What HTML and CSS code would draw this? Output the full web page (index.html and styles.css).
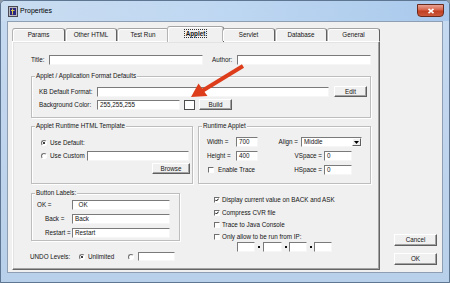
FILE: index.html
```html
<!DOCTYPE html>
<html>
<head>
<meta charset="utf-8">
<title>Properties</title>
<link rel="stylesheet" href="styles.css">
</head>
<body>
<div class="window">
  <div class="titlebar">
    <svg class="appicon" width="10" height="11" viewBox="0 0 10 11">
      <rect x="0.5" y="0.5" width="9" height="10" fill="#b9b9c4" stroke="#4a4a55"/>
      <rect x="2" y="2" width="6" height="7" fill="#2b2781"/>
      <path d="M4.5 2.5 V8.5 M3 4.5 H6.5" stroke="#d8c84a" stroke-width="1"/>
    </svg>
    <span class="title">Properties</span>
    <div class="close">
      <svg width="8" height="6" viewBox="0 0 8 6"><path d="M1.5 0.8 L6.5 5.2 M6.5 0.8 L1.5 5.2" stroke="#fff" stroke-width="1.6"/></svg>
    </div>
  </div>

  <div class="client">
    <div class="tabctl">
      <div class="tabs">
        <div class="tab w53">Params</div>
        <div class="tab w52">Other HTML</div>
        <div class="tab w52">Test Run</div>
        <div class="tab active"><span class="focus">Applet</span></div>
        <div class="tab w53">Servlet</div>
        <div class="tab w52">Database</div>
        <div class="tab w53">General</div>
      </div>

      <div class="panel">
        <div class="row h10">
          <span class="lbl lw18">Title:</span>
          <span class="inp iw154"></span>
          <span class="lbl author">Author:</span>
          <span class="inp iw134"></span>
        </div>

        <div class="grp g1">
          <span class="legend">Applet / Application Format Defaults</span>
          <div class="row h11">
            <span class="lbl lw58">KB Default Format:</span>
            <span class="inp iw232"></span>
            <span class="btn bw33 ml5">Edit</span>
          </div>
          <div class="row h11 mt2">
            <span class="lbl lw58">Background Color:</span>
            <span class="inp iw83">255,255,255</span>
            <span class="swatch"></span>
            <span class="btn bw33 ml4">Build</span>
          </div>
        </div>

        <div class="grprow">
          <div class="grp tmpl">
            <span class="legend">Applet Runtime HTML Template</span>
            <div class="row h11">
              <span class="radio on"></span><span class="rtext">Use Default:</span>
            </div>
            <div class="row h11 mt2">
              <span class="radlbl"><span class="radio"></span><span class="rtext">Use Custom</span></span>
              <span class="inp iw102"></span>
            </div>
            <div class="row h11 mt2 end">
              <span class="btn bw38">Browse</span>
            </div>
          </div>

          <div class="grp runtime">
            <span class="legend">Runtime Applet</span>
            <div class="row h10">
              <span class="lbl lw29">Width =</span>
              <span class="inp iw22">700</span>
              <span class="lbl rl43">Align =</span>
              <span class="select"><span class="seltext">Middle</span><span class="ddbtn"><svg width="5" height="3" viewBox="0 0 5 3"><path d="M0 0 H5 L2.5 3 Z" fill="#000"/></svg></span></span>
            </div>
            <div class="row h10 mt4">
              <span class="lbl lw29">Height =</span>
              <span class="inp iw22">400</span>
              <span class="lbl rl66">VSpace =</span>
              <span class="inp iw28">0</span>
            </div>
            <div class="row h10 mt4">
              <span class="cklbl"><span class="check"></span><span class="ctext">Enable Trace</span></span>
              <span class="lbl rl66">HSpace =</span>
              <span class="inp iw28">0</span>
            </div>
          </div>
        </div>

        <div class="row3">
          <div class="leftcol">
            <div class="grp btnlbl">
              <span class="legend">Button Labels:</span>
              <div class="row h10">
                <span class="lbl lw40 pl5">OK =</span>
                <span class="inp iw98">&nbsp;&nbsp;OK</span>
              </div>
              <div class="row h10 mt4">
                <span class="lbl lw40 pl13">Back =</span>
                <span class="inp iw98">Back</span>
              </div>
              <div class="row h10 mt4">
                <span class="lbl lw40 pl13">Restart =</span>
                <span class="inp iw98">Restart</span>
              </div>
            </div>
            <div class="row undo">
              <span class="lbl undolbl">UNDO Levels:</span>
              <span class="radio on"></span><span class="rtext unl">Unlimited</span>
              <span class="radio"></span>
              <span class="inp iw37 ml4"></span>
            </div>
          </div>

          <div class="checks">
            <div class="row"><span class="check on"><svg width="4" height="4" viewBox="0 0 4 4"><path d="M0.3 1.8 L1.5 3 L3.7 0.6" stroke="#000" stroke-width="1" fill="none"/></svg></span><span class="ctext2">Display current value on BACK and ASK</span></div>
            <div class="row"><span class="check on"><svg width="4" height="4" viewBox="0 0 4 4"><path d="M0.3 1.8 L1.5 3 L3.7 0.6" stroke="#000" stroke-width="1" fill="none"/></svg></span><span class="ctext2">Compress CVR file</span></div>
            <div class="row"><span class="check"></span><span class="ctext2">Trace to Java Console</span></div>
            <div class="row"><span class="check"></span><span class="ctext2">Only allow to be run from IP:</span></div>
            <div class="row ip">
              <span class="inp iw18"></span><span class="dot"></span>
              <span class="inp iw19"></span><span class="dot"></span>
              <span class="inp iw18"></span><span class="dot"></span>
              <span class="inp iw18"></span>
            </div>
          </div>
        </div>
      </div>
    </div>

    <div class="side">
      <span class="btn sbtn">Cancel</span>
      <span class="btn sbtn">OK</span>
    </div>
  </div>

  <svg class="arrow" width="450" height="283" viewBox="0 0 450 283">
    <line x1="243" y1="66" x2="202" y2="91" stroke="#dd3d1a" stroke-width="4"/>
    <polygon points="191,97 198.5,83.5 207.5,96" fill="#dd3d1a"/>
  </svg>
</div>
</body>
</html>
```

FILE: styles.css
```css
* { box-sizing: border-box; margin: 0; padding: 0; }
html, body { width: 450px; height: 283px; overflow: hidden; }
body {
  background: #8d99a6;
  font-family: "Liberation Sans", Arial, sans-serif;
  font-size: 6.3px;
  line-height: 8px;
  color: #141414;
}

.window {
  position: relative;
  width: 450px;
  height: 283px;
  display: flex;
  flex-direction: column;
  border: 1px solid #5e7692;
  border-radius: 5px 5px 0 0;
  background: linear-gradient(180deg, #c6daf0, #b9d0ea);
}

.titlebar {
  height: 20px;
  display: flex;
  align-items: center;
  padding-left: 7px;
  border-radius: 4px 4px 0 0;
  background: linear-gradient(90deg, #c9dcf0 0%, #c0d8f2 45%, #b2cfee 80%, #a9c8ec 100%);
}
.appicon { flex: none; }
.title { margin-left: 2px; font-size: 7px; color: #000; }
.close {
  margin-left: auto;
  margin-right: 5px;
  align-self: flex-start;
  margin-top: 3px;
  width: 27px;
  height: 13px;
  border: 1px solid #6b2a1e;
  border-radius: 0 0 4px 4px;
  background: linear-gradient(180deg, #e8a293 0%, #d7644b 45%, #c13f23 55%, #cc5a3c 100%);
  display: flex;
  align-items: center;
  justify-content: center;
}

.client {
  height: 252px;
  margin: 0 6px;
  border: 1px solid #8f9fb3;
  background: #f0f0f0;
  display: flex;
}

.tabctl { flex: none; width: 368px; margin: 4px 0 0 4px; }
.tabs {
  display: flex;
  align-items: flex-start;
  height: 15px;
  position: relative;
  z-index: 1;
}
.tab {
  flex: none;
  margin-top: 2px;
  height: 13px;
  text-align: center;
  line-height: 11px;
  border: 1px solid;
  border-bottom: none;
  border-color: #a4a4a4 #5f5f5f transparent #b4b4b4;
  border-radius: 3px 3px 0 0;
  box-shadow: inset 1px 1px 0 #fff;
}
.w52 { width: 52px; }
.w53 { width: 53px; }
.tab.active {
  width: 57px;
  margin: 0 -2px;
  height: 16px;
  line-height: 13px;
  background: #f0f0f0;
  font-weight: bold;
}
.focus { outline: 1px dotted #333; padding: 0 1px; }

.panel {
  width: 368px;
  height: 229px;
  border: 1px solid;
  border-color: #fff #656565 #656565 #fff;
  box-shadow: inset -1px -1px 0 #a3a3a3, inset 1px 1px 0 #e3e3e3;
  padding: 13px 8px 0 18px;
}

.row { display: flex; align-items: center; }
.h10 { height: 10px; }
.h11 { height: 11px; }
.mt2 { margin-top: 2px; }
.mt4 { margin-top: 4px; }
.ml4 { margin-left: 4px; }
.ml5 { margin-left: 5px; }
.end { justify-content: flex-end; }

.lbl { flex: none; white-space: nowrap; }
.lw18 { width: 18px; }
.lw29 { width: 29px; }
.lw40 { width: 40px; }
.lw58 { width: 58px; }
.author { width: 25px; margin-left: 9px; }
.rl43 { width: 43px; text-align: right; padding-right: 3px; }
.rl66 { width: 66px; text-align: right; padding-right: 2px; }
.pl5 { padding-left: 5px; }
.pl13 { padding-left: 13px; }

.inp {
  flex: none;
  height: 10px;
  background: #fff;
  border: 1px solid;
  border-color: #7a7a7a #f6f6f6 #f6f6f6 #7a7a7a;
  padding-left: 2px;
  line-height: 8px;
  white-space: pre;
  overflow: hidden;
}
.iw18 { width: 18px; }
.iw19 { width: 19px; }
.iw22 { width: 22px; }
.iw28 { width: 28px; }
.iw37 { width: 37px; height: 9px; }
.iw83 { width: 83px; }
.iw98 { width: 98px; }
.iw102 { width: 102px; }
.iw134 { width: 134px; }
.iw154 { width: 154px; }
.iw232 { width: 232px; }

.btn {
  flex: none;
  height: 11px;
  display: flex;
  align-items: center;
  justify-content: center;
  background: #f0f0f0;
  border: 1px solid;
  border-color: #fff #5f5f5f #5f5f5f #fff;
  box-shadow: inset -1px -1px 0 #a3a3a3;
}
.bw33 { width: 33px; }
.bw38 { width: 38px; }

.swatch {
  flex: none;
  width: 11px;
  height: 10px;
  margin-left: 4px;
  background: #fff;
  border: 1px solid #4e4e4e;
}

.grp {
  position: relative;
  border: 1px solid #bdbdbd;
  box-shadow: inset 1px 1px 0 #fff, 1px 1px 0 #fff;
}
.legend {
  position: absolute;
  left: 3px;
  top: -5px;
  padding: 0 1px;
  background: #f0f0f0;
  line-height: 8px;
  white-space: nowrap;
}
.g1 { width: 340px; height: 42px; margin-top: 11px; padding: 9px 0 0 7px; }

.grprow { display: flex; gap: 5px; margin-top: 8px; height: 58px; }
.tmpl { width: 162px; padding: 10px 2px 0 9px; }
.runtime { width: 173px; padding: 10px 0 0 8px; }

.radio {
  flex: none;
  width: 6px;
  height: 6px;
  border-radius: 50%;
  border: 1px solid;
  border-color: #6f6f6f #fff #fff #6f6f6f;
  background: #fff;
  display: flex;
  align-items: center;
  justify-content: center;
}
.radio.on::after {
  content: "";
  width: 2px;
  height: 2px;
  border-radius: 50%;
  background: #000;
}
.rtext { margin-left: 3px; white-space: nowrap; }
.radlbl { flex: none; width: 46px; display: flex; align-items: center; }

.select {
  flex: none;
  width: 61px;
  height: 10px;
  background: #fff;
  border: 1px solid;
  border-color: #7a7a7a #f6f6f6 #f6f6f6 #7a7a7a;
  display: flex;
  align-items: center;
}
.seltext { flex: 1; padding-left: 2px; }
.ddbtn {
  flex: none;
  width: 9px;
  height: 8px;
  background: #f0f0f0;
  border: 1px solid;
  border-color: #fff #5f5f5f #5f5f5f #fff;
  display: flex;
  align-items: center;
  justify-content: center;
}

.check {
  flex: none;
  width: 6px;
  height: 6px;
  background: #fff;
  border: 1px solid;
  border-color: #6f6f6f #fff #fff #6f6f6f;
  display: flex;
  align-items: center;
  justify-content: center;
}
.cklbl { flex: none; width: 51px; display: flex; align-items: center; padding-left: 1px; }
.ctext { margin-left: 4px; white-space: nowrap; }
.ctext2 { margin-left: 2px; white-space: nowrap; }

.row3 { display: flex; margin-top: 9px; }
.leftcol { flex: none; width: 149px; }
.btnlbl { height: 48px; padding-top: 6px; }
.undo { height: 9px; margin-top: 11px; margin-left: -1px; }
.undolbl { width: 49px; }
.unl { width: 40px; }

.checks {
  margin-left: 34px;
  margin-top: 1px;
  display: grid;
  grid-template-rows: 12px 13px 12px 11px 10px;
}
.ip { padding-left: 23px; }
.dot {
  flex: none;
  width: 7px;
  display: flex;
  justify-content: center;
}
.dot::after { content: ""; width: 2px; height: 2px; background: #111; }
.ip .dot:nth-of-type(2), .ip .dot:nth-of-type(3) { width: 8px; }

.side {
  flex: none;
  width: 43px;
  margin-left: 14px;
  display: flex;
  flex-direction: column;
  justify-content: flex-end;
  gap: 7px;
  padding-bottom: 7px;
}
.sbtn { height: 12px; }

.arrow { position: absolute; left: -1px; top: -1px; pointer-events: none; }
```
